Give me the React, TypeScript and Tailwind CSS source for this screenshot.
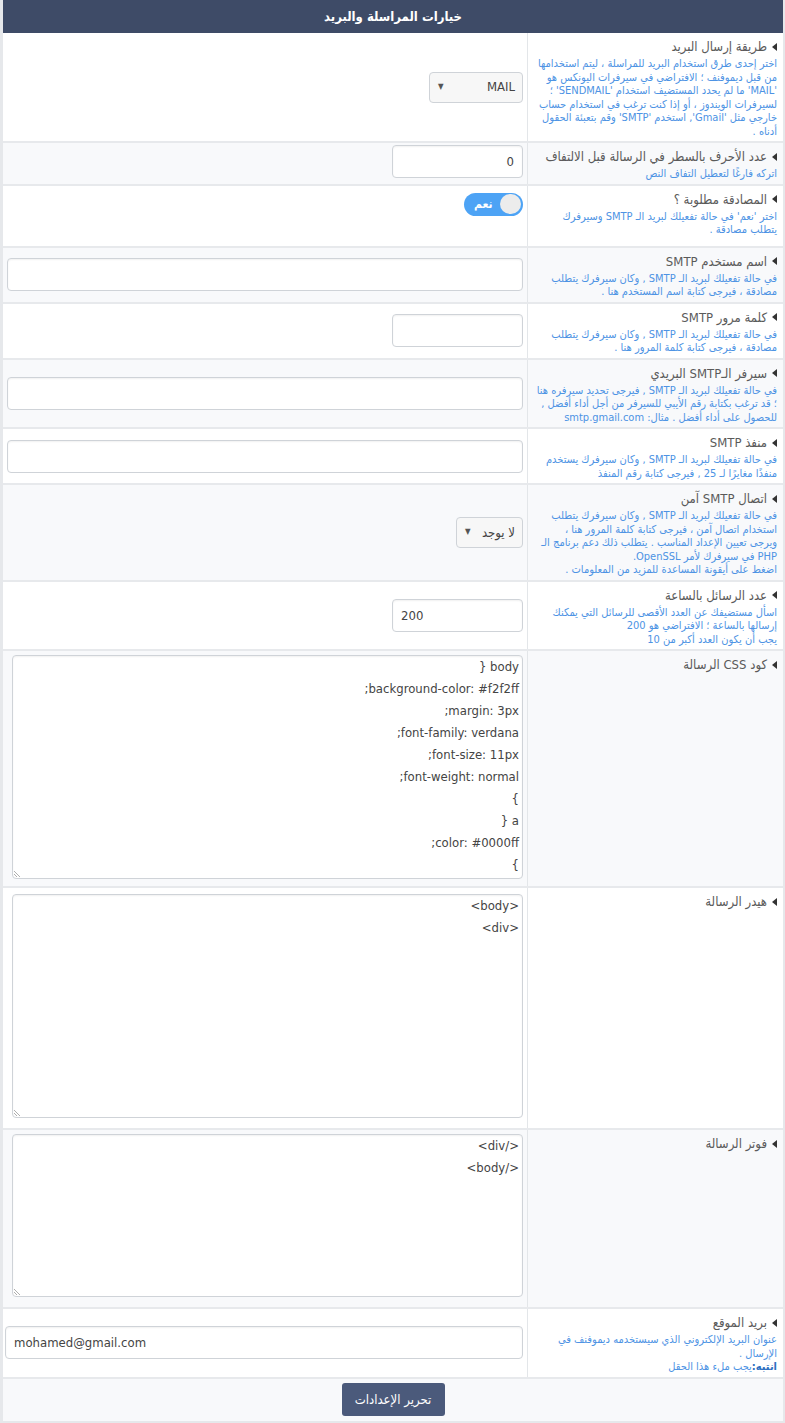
import React from 'react';

const font = { fontFamily: '"DejaVu Sans Condensed", "DejaVu Sans", Tahoma, sans-serif' };

const Arrow = () => (
  <svg width="5" height="8" viewBox="0 0 5 8" className="inline-block ml-[5px] mb-[2px]">
    <polygon points="5,0 5,8 0,4" fill="#333" />
  </svg>
);

type RowProps = {
  title: string;
  desc?: React.ReactNode;
  gray?: boolean;
  children?: React.ReactNode;
  align?: string;
  extra?: string;
};

const Row: React.FC<RowProps> = ({ title, desc, gray, children, align = 'items-center', extra = '' }) => (
  <div className={`flex border-b-2 border-[#e7e9ec] ${gray ? 'bg-[#f8f9fb]' : 'bg-white'}`}>
    <div className={`w-[256px] shrink-0 border-l border-[#e3e6e9] pr-[6px] pl-[8px] pt-1 pb-[3px] ${extra}`}>
      <div className="text-[13px] leading-[20px] text-[#5a5a5a]">
        <Arrow />
        {title}
      </div>
      {desc && <div className="text-[11px] leading-[13.5px] text-[#4d93e4]">{desc}</div>}
    </div>
    <div className={`flex-1 flex ${align} pr-1 pl-1`}>{children}</div>
  </div>
);

const Input: React.FC<{ value?: string; small?: boolean }> = ({ value = '', small }) => (
  <div
    className={`h-[33px] ${small ? 'w-[131px]' : 'w-full'} rounded-[4px] border border-[#cfd3d8] bg-white shadow-[inset_0_1px_2px_rgba(0,0,0,0.06)] flex items-center px-[8px] text-[13px] text-[#444]`}
    dir={small && value === '0' ? 'rtl' : 'ltr'}
  >
    {value}
  </div>
);

const Select: React.FC<{ value: string; w: string }> = ({ value, w }) => (
  <div className={`h-[31px] ${w} rounded-[4px] border border-[#cfd3d8] bg-[#f7f7f7] flex items-center justify-between pr-[7px] pl-[8px] text-[13px] text-[#444]`}>
    <span>{value}</span>
    <span className="text-[8px] text-[#555]">▼</span>
  </div>
);

const Area: React.FC<{ lines: string[]; h: string; m: string }> = ({ lines, h, m }) => (
  <div className={`relative ${h} ${m} w-full ml-[5px] rounded-[4px] border border-[#cfd3d8] bg-white shadow-[inset_0_1px_2px_rgba(0,0,0,0.06)] pr-[3px] text-[13px] leading-[22px] text-[#444]`}>
    {lines.map((l, i) => (
      <div key={i} className="whitespace-pre">{l}</div>
    ))}
    <svg width="8" height="8" viewBox="0 0 8 8" className="absolute left-[1px] bottom-[1px]">
      <line x1="0" y1="2" x2="6" y2="8" stroke="#999" strokeWidth="0.8" />
      <line x1="0" y1="5" x2="3" y2="8" stroke="#999" strokeWidth="0.8" />
    </svg>
  </div>
);

export default function App() {
  return (
    <div dir="rtl" style={font} className="w-[785px] bg-white border-l-[3px] border-r-[2px] border-b-[4px] border-[#e6e8eb]">
      <div className="h-[33px] bg-[#3e4b67] flex items-center justify-center text-white text-[13px] font-bold">
        خيارات المراسلة والبريد
      </div>

      <Row
        title="طريقة إرسال البريد"
        desc="اختر إحدى طرق استخدام البريد للمراسلة ، ليتم استخدامها من قبل ديموفنف ؛ الافتراضي في سيرفرات اليونكس هو 'MAIL' ما لم يحدد المستضيف استخدام 'SENDMAIL' ؛ لسيرفرات الويندوز ، أو إذا كنت ترغب في استخدام حساب خارجي مثل 'Gmail', استخدم 'SMTP' وقم بتعبئة الحقول أدناه ."
      >
        <Select value="MAIL" w="w-[94px]" />
      </Row>

      <Row gray title="عدد الأحرف بالسطر في الرسالة قبل الالتفاف" desc="اتركه فارغًا لتعطيل التفاف النص">
        <div className="w-[131px] -mt-1">
          <Input value="0" small />
        </div>
      </Row>

      <Row
        title="المصادقة مطلوبة ؟"
        desc="اختر 'نعم' في حالة تفعيلك لبريد الـ SMTP وسيرفرك يتطلب مصادقة ."
        align="items-start"
        extra="pb-[9px]"
      >
        <div className="mt-[7px] h-[23px] w-[59px] rounded-full bg-[#4da3f5] flex items-center pr-[2px] pl-[10px] justify-between">
          <span className="w-[21px] h-[20px] rounded-full bg-[#ececec]" />
          <span className="text-white text-[12px] font-bold">نعم</span>
        </div>
      </Row>

      <Row
        gray
        title="اسم مستخدم SMTP"
        desc="في حالة تفعيلك لبريد الـ SMTP , وكان سيرفرك يتطلب مصادقة ، فيرجى كتابة اسم المستخدم هنا ."
      >
        <Input />
      </Row>

      <Row
        title="كلمة مرور SMTP"
        desc="في حالة تفعيلك لبريد الـ SMTP , وكان سيرفرك يتطلب مصادقة ، فيرجى كتابة كلمة المرور هنا ."
      >
        <Input small />
      </Row>

      <Row
        gray
        title="سيرفر الـSMTP البريدي"
        desc="في حالة تفعيلك لبريد الـ SMTP , فيرجى تحديد سيرفره هنا ؛ قد ترغب بكتابة رقم الأيبي للسيرفر من أجل أداء أفضل , للحصول على أداء أفضل . مثال: smtp.gmail.com"
      >
        <Input />
      </Row>

      <Row
        title="منفذ SMTP"
        desc="في حالة تفعيلك لبريد الـ SMTP , وكان سيرفرك يستخدم منفذًا مغايرًا لـ 25 , فيرجى كتابة رقم المنفذ"
      >
        <Input />
      </Row>

      <Row
        gray
        title="اتصال SMTP آمن"
        desc={
          <>
            في حالة تفعيلك لبريد الـ SMTP , وكان سيرفرك يتطلب استخدام اتصال آمن ، فيرجى كتابة كلمة المرور هنا ، ويرجى تعيين الإعداد المناسب . يتطلب ذلك دعم برنامج الـ PHP في سيرفرك لأمر OpenSSL.
            <br />
            اضغط على أيقونة المساعدة للمزيد من المعلومات .
          </>
        }
      >
        <Select value="لا يوجد" w="w-[67px]" />
      </Row>

      <Row
        title="عدد الرسائل بالساعة"
        desc={
          <>
            اسأل مستضيفك عن العدد الأقصى للرسائل التي يمكنك إرسالها بالساعة ؛ الافتراضي هو 200
            <br />
            يجب أن يكون العدد أكبر من 10
          </>
        }
      >
        <div className="w-[131px]">
          <Input value="200" small />
        </div>
      </Row>

      <Row gray title="كود CSS الرسالة" align="items-start">
        <Area
          h="h-[224px]"
          m="mt-1 mb-[7px]"
          lines={[
            'body {',
            'background-color: #f2f2ff;',
            'margin: 3px;',
            'font-family: verdana;',
            'font-size: 11px;',
            'font-weight: normal;',
            '}',
            'a {',
            'color: #0000ff;',
            '}',
          ]}
        />
      </Row>

      <Row title="هيدر الرسالة" align="items-start">
        <Area h="h-[224px]" m="mt-[6px] mb-[10px]" lines={['<body>', '<div>']} />
      </Row>

      <Row gray title="فوتر الرسالة" align="items-start">
        <Area h="h-[163px]" m="mt-1 mb-[10px]" lines={['</div>', '</body>']} />
      </Row>

      <Row
        title="بريد الموقع"
        desc={
          <>
            عنوان البريد الإلكتروني الذي سيستخدمه ديموفنف في الإرسال .
            <br />
            <b className="text-[#2f6fc0]">انتبه:</b>يجب ملء هذا الحقل
          </>
        }
      >
        <div className="w-[calc(100%+2px)] shrink-0">
          <Input value="mohamed@gmail.com" />
        </div>
      </Row>

      <div className="h-[42px] bg-[#f8f9fb] flex items-center justify-center">
        <button className="h-[33px] w-[103px] rounded-[3px] bg-[#4b5a7b] text-white text-[13px]" style={font}>
          تحرير الإعدادات
        </button>
      </div>
    </div>
  );
}
